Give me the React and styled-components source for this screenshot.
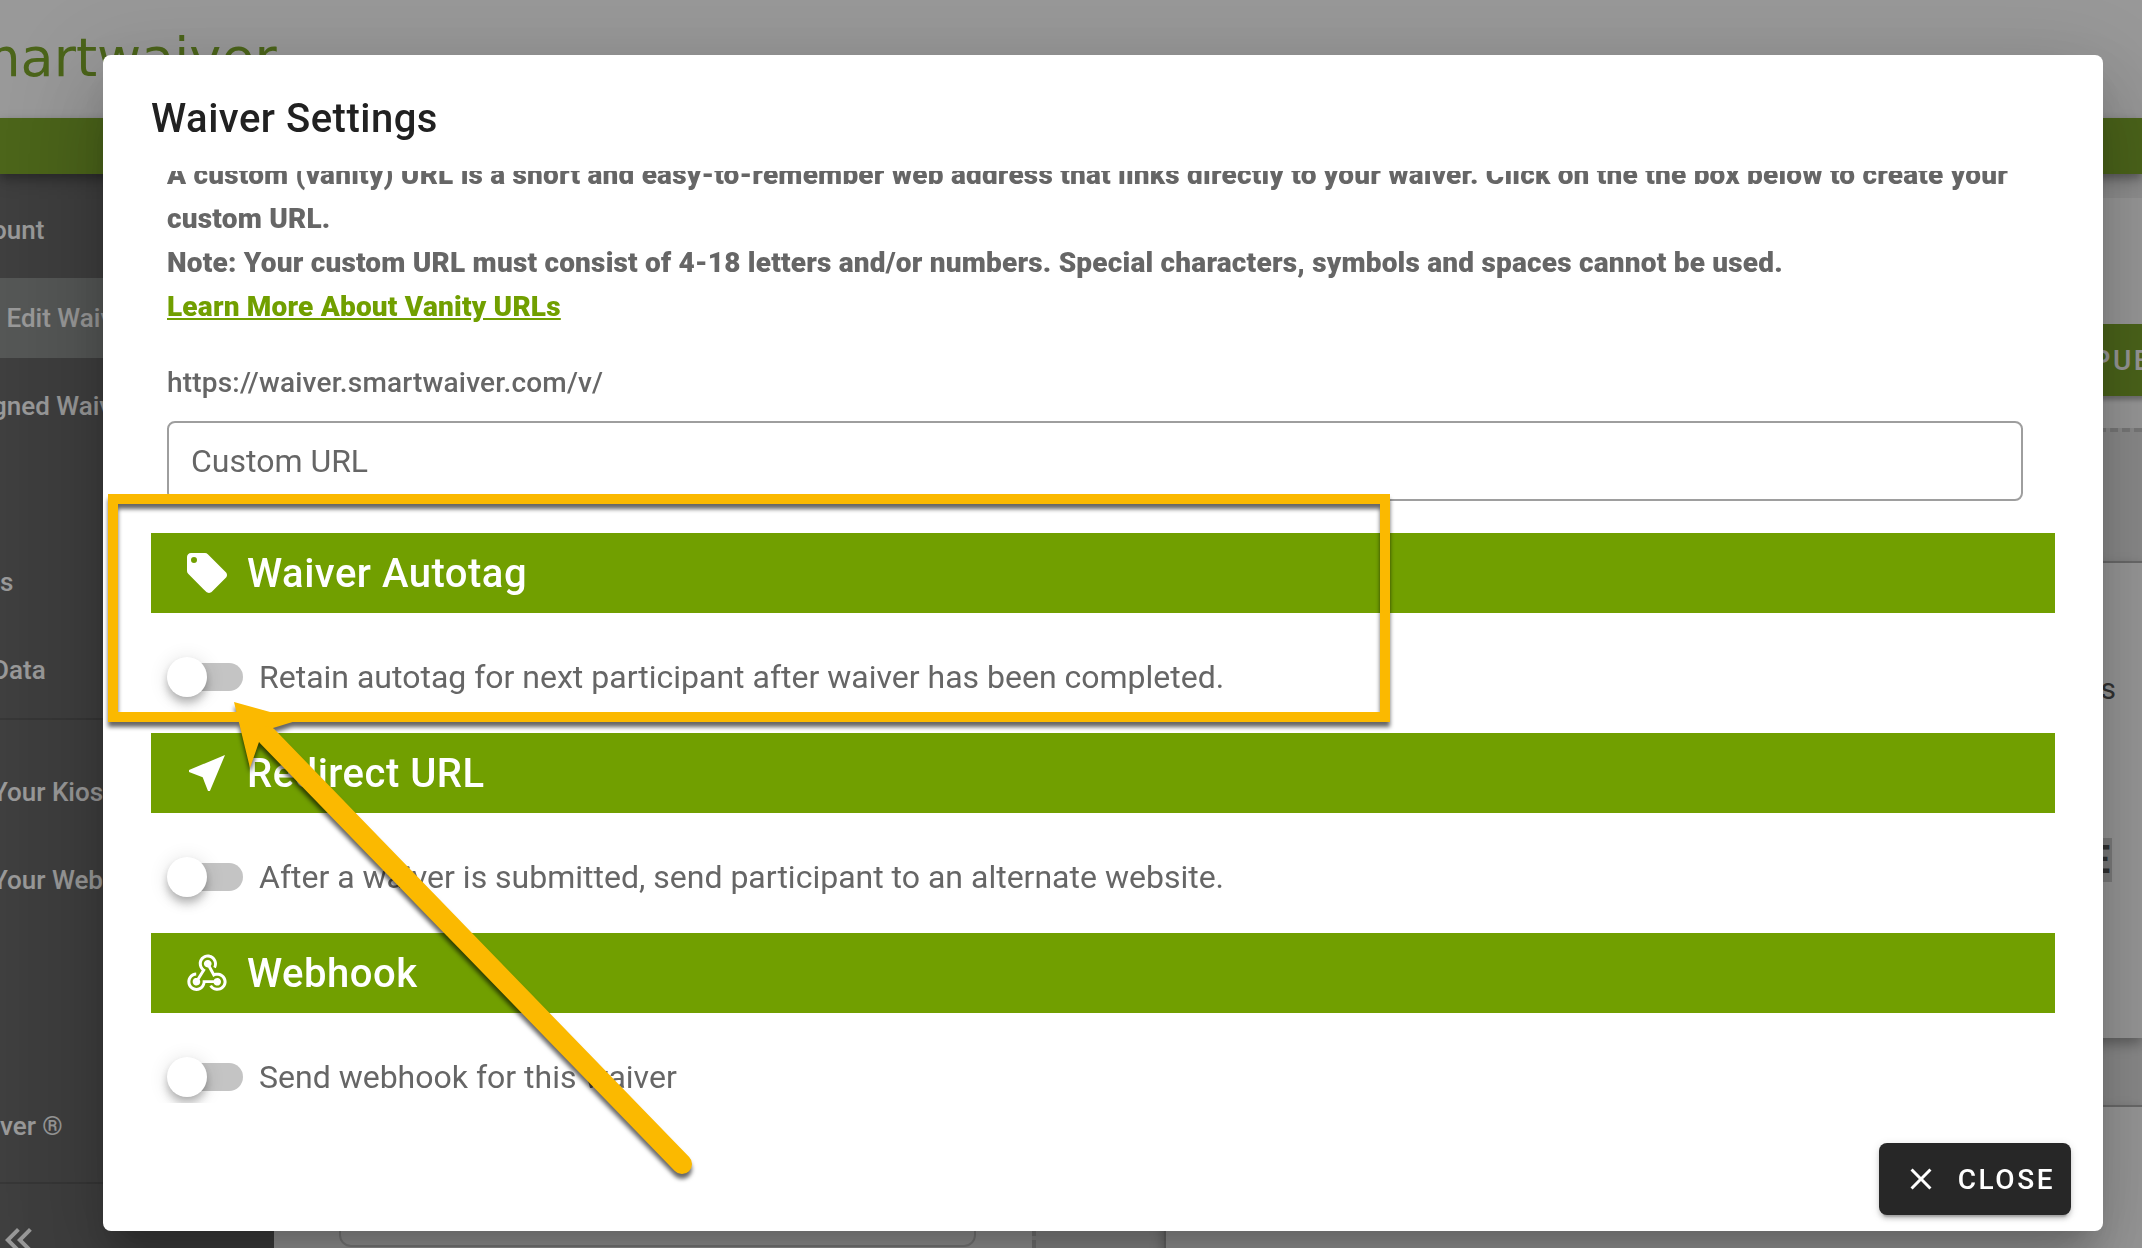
import styled, { createGlobalStyle } from 'styled-components';
import { useState } from 'react';

const GlobalStyle = createGlobalStyle`
  * {
    box-sizing: border-box;
  }

  body {
    margin: 0;
    font-family: Roboto, 'Liberation Sans', sans-serif;
    overflow: hidden;
  }
`;

const Page = styled.div`
  height: 100vh;
  background: #fff;
  display: flex;
  flex-direction: column;
  overflow: hidden;
`;

const Header = styled.header`
  height: 118px;
  flex-shrink: 0;
  padding-top: 22px;
`;

const Logo = styled.div`
  margin-left: -32px;
  color: #719f16;
  font-family: 'DejaVu Sans', sans-serif;
  font-size: 54px;
  line-height: 72px;
`;

const GreenBar = styled.div`
  height: 56px;
  flex-shrink: 0;
  background: #719f16;
  box-shadow: 0 4px 8px rgba(0, 0, 0, 0.3), 0 8px 16px rgba(0, 0, 0, 0.2);
  z-index: 1;
`;

const Main = styled.div`
  flex: 1;
  min-height: 0;
  display: flex;
`;

const Sidebar = styled.nav`
  width: 274px;
  flex-shrink: 0;
  background: #595959;
  display: flex;
  flex-direction: column;
`;

const NavGroup = styled.div`
  display: flex;
  flex-direction: column;
  gap: 8px;
  padding: ${(props) => props.$padding};
  margin-top: ${(props) => (props.$bottom ? 'auto' : 0)};
  border-bottom: 2px solid ${(props) => (props.$line ? '#4a4a4a' : 'transparent')};
`;

const NavItem = styled.a`
  height: 80px;
  margin-left: ${(props) => (props.$cut ? '-8px' : 0)};
  display: flex;
  align-items: center;
  background: ${(props) => (props.$active ? '#828684' : 'transparent')};
  color: #fff;
  font-size: 26px;
  font-weight: 500;
  text-decoration: none;
  white-space: pre;
`;

const CollapseButton = styled.button`
  height: 64px;
  flex-shrink: 0;
  margin-left: -5px;
  padding: 32px 0 0;
  display: flex;
  background: transparent;
  border: none;
  color: #fff;
`;

const Content = styled.main`
  flex: 1;
  min-width: 0;
  display: flex;
  flex-direction: column;
`;

const Strip = styled.div`
  height: 24px;
  background: #f0f0f0;
`;

const Toolbar = styled.div`
  height: 230px;
  padding-top: 126px;
  display: flex;
  align-items: flex-start;
  justify-content: flex-end;
`;

const PublishButton = styled.button`
  height: 72px;
  margin-right: -28px;
  padding: 0 16px 0 32px;
  background: #719f16;
  border: none;
  border-radius: 8px;
  box-shadow: 0 4px 4px rgba(0, 0, 0, 0.3);
  color: #fff;
  font-family: inherit;
  font-size: 28px;
  font-weight: 500;
  letter-spacing: 0.09em;
`;

const Columns = styled.div`
  flex: 1;
  min-height: 0;
  display: grid;
  grid-template-columns: 758fr 1110fr;
`;

const Editor = styled.section`
  padding: 0 56px 1px 65px;
  display: flex;
`;

const EditorBox = styled.div`
  flex: 1;
  border: 2px solid #d0d0d0;
  border-radius: 12px;
`;

const Preview = styled.section`
  min-height: 0;
  padding: 129px 0 0 128px;
  background: #e6e6e6;
  border-top: 4px dashed #c4c4c4;
  border-left: 4px dashed #c4c4c4;
  display: flex;
  flex-direction: column;
  gap: 67px;
  overflow: hidden;
`;

const Card = styled.div`
  height: 477px;
  flex-shrink: 0;
  padding: 104px 26px 0 0;
  background: #fff;
  border-top: 2px solid #aaa;
  border-left: 2px solid #aaa;
  box-shadow: 0 6px 12px rgba(0, 0, 0, 0.35);
  color: #444;
  text-align: right;
`;

const CardText = styled.p`
  margin: 0;
  font-size: 30px;
  line-height: 44px;
`;

const CardHighlight = styled.strong`
  display: inline-block;
  margin: 127px 4px 0 0;
  padding: 0 2px;
  background: #ccc;
  font-size: 38px;
  line-height: 44px;
`;

const Scrim = styled.div`
  position: fixed;
  inset: 0;
  z-index: 2;
  padding: 55px 39px 17px 103px;
  background: rgba(33, 33, 33, 0.46);
`;

const Dialog = styled.div`
  position: relative;
  height: 100%;
  background: #fff;
  border-radius: 8px;
  box-shadow: 0 22px 30px -14px rgba(0, 0, 0, 0.2), 0 48px 76px 6px rgba(0, 0, 0, 0.14),
    0 18px 92px 16px rgba(0, 0, 0, 0.12);
  display: flex;
  flex-direction: column;
`;

const DialogTitle = styled.h1`
  margin: 0;
  padding: 32px 48px 20px;
  color: #212121;
  font-size: 40px;
  font-weight: 500;
  line-height: 64px;
  letter-spacing: 0.0125em;
`;

/* scrolled to its end, so the first line is cut off by the title */
const DialogBody = styled.div`
  flex: 1;
  min-height: 0;
  padding: 0 48px 2px;
  display: flex;
  flex-direction: column;
  justify-content: flex-end;
  gap: 32px;
  overflow: hidden;
`;

const UrlSection = styled.section`
  flex-shrink: 0;
  padding: 0 32px 0 16px;
  color: #666;
  font-size: 28px;
  line-height: 44px;
  letter-spacing: 0.007em;
`;

const UrlText = styled.p`
  margin: 0;
  font-weight: 900;
`;

const UrlLink = styled.a`
  color: #719f00;
`;

const UrlLabel = styled.label`
  display: block;
  margin: 32px 0 16px;
  font-weight: 500;
`;

const UrlInput = styled.input`
  display: block;
  width: 100%;
  height: 80px;
  padding: 0 22px;
  border: 2px solid #9e9e9e;
  border-radius: 8px;
  background: #fff;
  color: #212121;
  font-family: inherit;
  font-size: 32px;

  &::placeholder {
    color: #666;
    opacity: 1;
  }
`;

const Section = styled.section`
  flex-shrink: 0;
`;

const SectionTitle = styled.h2`
  height: 80px;
  margin: 0;
  padding: 0 32px;
  display: flex;
  align-items: center;
  gap: 16px;
  background: #719f00;
  color: #fff;
  font-size: 40px;
  font-weight: 500;
  letter-spacing: 0.0125em;
`;

const SwitchRow = styled.label`
  display: flex;
  align-items: center;
  gap: 16px;
  height: 88px;
  padding: 44px 16px 4px;
  color: #666;
  font-size: 32px;
`;

const Switch = styled.input`
  appearance: none;
  position: relative;
  width: 76px;
  height: 40px;
  margin: 0;
  cursor: pointer;

  &::before {
    content: '';
    position: absolute;
    inset: 6px 0 6px 4px;
    border-radius: 14px;
    background: #c4c4c4;
  }

  &::after {
    content: '';
    position: absolute;
    top: 0;
    left: 0;
    width: 40px;
    height: 40px;
    border-radius: 50%;
    background: #fff;
    box-shadow: 0 4px 8px -2px rgba(0, 0, 0, 0.2), 0 8px 10px rgba(0, 0, 0, 0.14), 0 2px 20px rgba(0, 0, 0, 0.12);
  }

  &:checked::after {
    left: 36px;
  }
`;

const DialogActions = styled.div`
  padding: 40px 32px 16px;
  display: flex;
  justify-content: flex-end;
`;

const CloseButton = styled.button`
  height: 72px;
  min-width: 192px;
  padding: 0 16px 0 24px;
  display: flex;
  align-items: center;
  justify-content: space-between;
  background: #272727;
  border: none;
  border-radius: 8px;
  box-shadow: 0 6px 2px -4px rgba(0, 0, 0, 0.2), 0 4px 4px rgba(0, 0, 0, 0.14), 0 2px 10px rgba(0, 0, 0, 0.12);
  color: #fff;
  font-family: inherit;
  font-size: 28px;
  font-weight: 500;
  letter-spacing: 0.09em;
  cursor: pointer;
`;

const Annotation = styled.svg`
  position: absolute;
  top: 0;
  left: 0;
  pointer-events: none;
  filter: drop-shadow(0 5px 2px rgba(0, 0, 0, 0.6));
`;

const icons = {
  close:
    'M19,6.41L17.59,5L12,10.59L6.41,5L5,6.41L10.59,12L5,17.59L6.41,19L12,13.41L17.59,19L19,17.59L13.41,12L19,6.41Z',
  collapse:
    'M18.41,7.41L17,6L11,12L17,18L18.41,16.59L13.83,12L18.41,7.41M12.41,7.41L11,6L5,12L11,18L12.41,16.59L7.83,12L12.41,7.41Z',
  tag: 'M5.5,7A1.5,1.5 0 0,1 4,5.5A1.5,1.5 0 0,1 5.5,4A1.5,1.5 0 0,1 7,5.5A1.5,1.5 0 0,1 5.5,7M21.41,11.58L12.41,2.58C12.05,2.22 11.55,2 11,2H4C2.89,2 2,2.89 2,4V11C2,11.55 2.22,12.05 2.59,12.41L11.58,21.41C11.95,21.77 12.45,22 13,22C13.55,22 14.05,21.77 14.41,21.41L21.41,14.41C21.78,14.05 22,13.55 22,13C22,12.44 21.77,11.94 21.41,11.58Z',
  redirect: 'M21,3L3,10.53V11.5L9.84,14.16L12.5,21H13.46L21,3Z',
  webhook:
    'M10.46,19C9,21.07 6.15,21.59 4.09,20.15C2.04,18.71 1.56,15.84 3,13.75C3.87,12.5 5.21,11.83 6.58,11.77L6.63,13.2C5.72,13.27 4.84,13.74 4.27,14.56C3.27,16 3.58,17.94 4.95,18.91C6.33,19.87 8.26,19.5 9.26,18.07C9.57,17.62 9.75,17.13 9.82,16.63V15.62L15.4,15.58L15.47,15.47C16,14.55 17.15,14.23 18.05,14.75C18.95,15.27 19.26,16.43 18.73,17.35C18.2,18.26 17.04,18.58 16.14,18.06C15.73,17.83 15.44,17.46 15.31,17.04L11.24,17.06C11.13,17.73 10.87,18.38 10.46,19M17.74,11.86C20.27,12.17 22.07,14.44 21.76,16.93C21.45,19.43 19.15,21.2 16.62,20.89C15.13,20.71 13.9,19.86 13.19,18.68L14.43,17.96C14.92,18.73 15.75,19.28 16.75,19.41C18.5,19.62 20.05,18.43 20.26,16.76C20.47,15.09 19.23,13.56 17.5,13.35C16.96,13.29 16.44,13.36 15.97,13.53L15.12,13.97L12.54,9.2H12.32C11.26,9.16 10.41,8.29 10.44,7.25C10.47,6.21 11.4,5.4 12.45,5.44C13.5,5.5 14.33,6.35 14.3,7.39C14.28,7.83 14.11,8.23 13.84,8.54L15.74,12.05C16.36,11.85 17.04,11.78 17.74,11.86M8.25,9.14C7.25,6.79 8.31,4.1 10.62,3.12C12.94,2.14 15.62,3.25 16.62,5.6C17.21,6.97 17.09,8.47 16.42,9.67L15.18,8.95C15.6,8.14 15.67,7.15 15.27,6.22C14.59,4.62 12.78,3.85 11.23,4.5C9.67,5.16 8.97,7 9.65,8.6C9.93,9.26 10.4,9.77 10.97,10.11L11.36,10.32L8.29,15.31C8.32,15.36 8.36,15.42 8.39,15.5C8.88,16.41 8.54,17.56 7.62,18.05C6.71,18.54 5.56,18.18 5.06,17.24C4.57,16.31 4.91,15.16 5.83,14.67C6.22,14.46 6.65,14.41 7.06,14.5L9.37,10.73C8.9,10.3 8.5,9.76 8.25,9.14Z',
};

const Icon = ({ name, size = 48 }) => (
  <svg width={size} height={size} viewBox='0 0 24 24' fill='currentColor' aria-hidden='true'>
    <path d={icons[name]} />
  </svg>
);

const sections = [
  { id: 'autotag', title: 'Waiver Autotag', icon: 'tag', label: 'Retain autotag for next participant after waiver has been completed.' },
  { id: 'redirect', title: 'Redirect URL', icon: 'redirect', label: 'After a waiver is submitted, send participant to an alternate website.' },
  { id: 'webhook', title: 'Webhook', icon: 'webhook', label: 'Send webhook for this waiver' },
];

function App() {
  const [url, setUrl] = useState('');
  const [enabled, setEnabled] = useState({});

  const toggle = (id) => {
    setEnabled((enabled) => ({ ...enabled, [id]: !enabled[id] }));
  };

  return (
    <>
      <GlobalStyle />
      <Page>
        <Header>
          <Logo>martwaiver</Logo>
        </Header>
        <GreenBar />
        <Main>
          <Sidebar>
            <NavGroup $padding='16px 0 8px' $line>
              <NavItem href='#account' $cut>
                ount
              </NavItem>
              <NavItem href='#edit' $active>
                {' Edit Waiver'}
              </NavItem>
              <NavItem href='#signed' $cut>
                gned Waiver
              </NavItem>
              <NavItem as='span' />
              <NavItem href='#settings'>s</NavItem>
              <NavItem href='#data' $cut>
                Data
              </NavItem>
            </NavGroup>
            <NavGroup $padding='32px 0 0'>
              <NavItem href='#kiosk' $cut>
                Your Kiosk
              </NavItem>
              <NavItem href='#web' $cut>
                Your Web
              </NavItem>
            </NavGroup>
            <NavGroup $padding='0 0 16px' $bottom $line>
              <NavItem href='#about'>ver ®</NavItem>
            </NavGroup>
            <CollapseButton type='button' aria-label='Collapse menu'>
              <Icon name='collapse' />
            </CollapseButton>
          </Sidebar>
          <Content>
            <Strip />
            <Toolbar>
              <PublishButton type='button'>PUB</PublishButton>
            </Toolbar>
            <Columns>
              <Editor>
                <EditorBox />
              </Editor>
              <Preview>
                <Card>
                  <CardText>s</CardText>
                  <CardHighlight>E</CardHighlight>
                </Card>
                <Card />
              </Preview>
            </Columns>
          </Content>
        </Main>
      </Page>
      <Scrim>
        <Dialog role='dialog' aria-labelledby='dialog-title'>
          <DialogTitle id='dialog-title'>Waiver Settings</DialogTitle>
          <DialogBody>
            <UrlSection>
              <UrlText>
                A custom (vanity) URL is a short and easy-to-remember web address that links directly to your waiver.
                Click on the the box below to create your custom URL.
                <br />
                Note: Your custom URL must consist of 4-18 letters and/or numbers. Special characters, symbols and
                spaces cannot be used.
                <br />
                <UrlLink href='#vanity-urls'>Learn More About Vanity URLs</UrlLink>
              </UrlText>
              <UrlLabel htmlFor='custom-url'>https://waiver.smartwaiver.com/v/</UrlLabel>
              <UrlInput
                id='custom-url'
                type='text'
                value={url}
                placeholder='Custom URL'
                onChange={(e) => setUrl(e.target.value)}
              />
            </UrlSection>
            {sections.map((section) => (
              <Section key={section.id}>
                <SectionTitle>
                  <Icon name={section.icon} />
                  {section.title}
                </SectionTitle>
                <SwitchRow htmlFor={section.id}>
                  <Switch
                    id={section.id}
                    type='checkbox'
                    role='switch'
                    checked={!!enabled[section.id]}
                    onChange={() => toggle(section.id)}
                  />
                  {section.label}
                </SwitchRow>
              </Section>
            ))}
          </DialogBody>
          <DialogActions>
            <CloseButton type='button'>
              <Icon name='close' size={36} />
              CLOSE
            </CloseButton>
          </DialogActions>
          <Annotation width='1300' height='1150' viewBox='0 0 1300 1150' aria-hidden='true'>
            <rect x='10' y='444' width='1272' height='218' fill='none' stroke='#fbb900' strokeWidth='10' />
            <path d='M131 647L196 665L170 673L156 687L147 713Z' fill='#fbb900' />
            <path d='M164 681L579 1109' stroke='#fbb900' strokeWidth='20' strokeLinecap='round' />
          </Annotation>
        </Dialog>
      </Scrim>
    </>
  );
}

export default App;
